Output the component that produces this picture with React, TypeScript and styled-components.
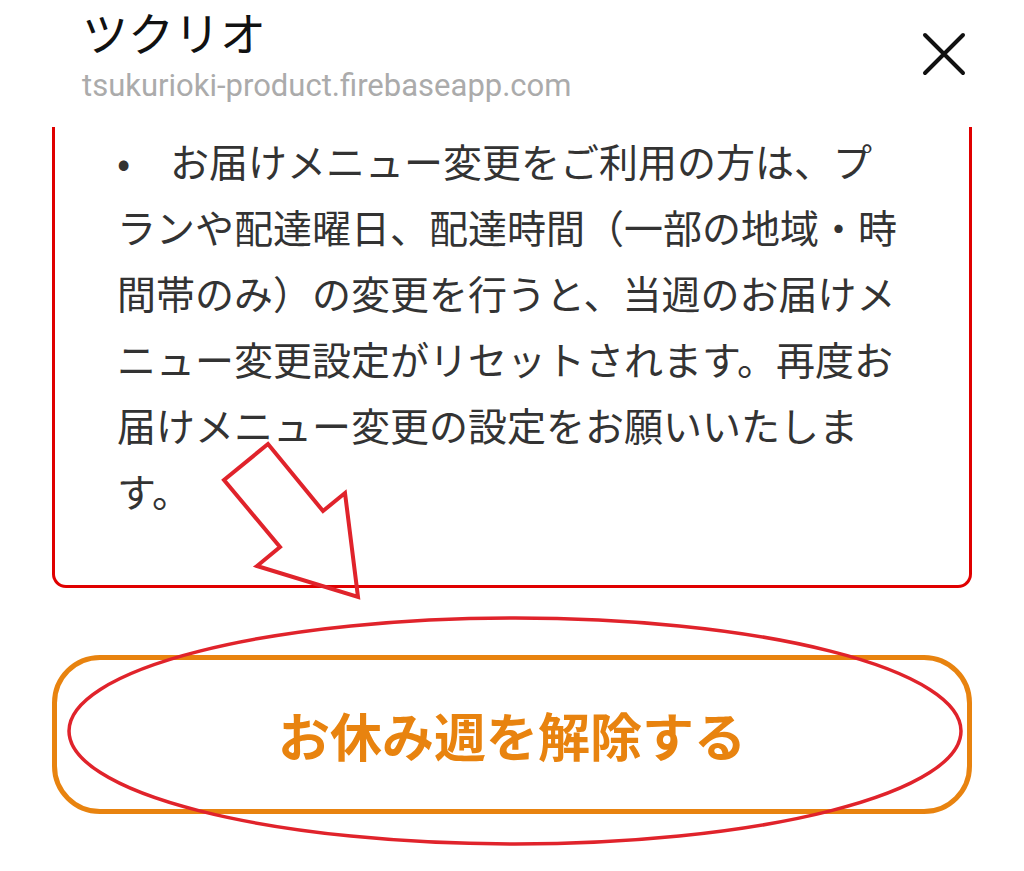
import React from 'react'
import styled, { createGlobalStyle } from 'styled-components'

const GlobalStyle = createGlobalStyle`
  html, body {
    margin: 0;
    padding: 0;
    background: #fff;
  }
  body {
    font-family: 'Noto Sans CJK JP', 'Noto Sans', sans-serif;
  }
`

const Page = styled.div`
  position: relative;
  width: 1024px;
  height: 871px;
  overflow: hidden;
  background: #fff;
`

const Header = styled.header`
  height: 127px;
  display: flex;
  justify-content: space-between;
  align-items: flex-start;
  padding: 0 56px 0 82px;
  box-sizing: border-box;
`

const TitleBlock = styled.div`
  display: flex;
  flex-direction: column;
`

const Title = styled.h1`
  margin: 0;
  font-family: 'Noto Sans CJK JP', sans-serif;
  font-size: 46px;
  font-weight: 400;
  line-height: 62px;
  color: #111;
`

const Url = styled.div`
  font-family: Roboto, 'Liberation Sans', sans-serif;
  font-size: 31px;
  line-height: 48px;
  color: #ababab;
`

const CloseButton = styled.button`
  margin-top: 30px;
  width: 48px;
  height: 48px;
  padding: 0;
  border: 0;
  background: none;
  display: flex;
  align-items: center;
  justify-content: center;
`

const Notice = styled.div`
  margin: 0 52px;
  border: 3px solid #e00000;
  border-top: 0;
  border-radius: 0 0 14px 14px;
  padding: 0 72px 62px 62px;
`

const NoticeText = styled.p`
  margin: 0;
  width: 20em;
  font-family: 'Noto Sans CJK JP', sans-serif;
  font-size: 39px;
  line-height: 66px;
  color: #333;
`

const Bullet = styled.span`
  display: inline-block;
  width: 1.36em;
`

const ReleaseButton = styled.button`
  display: flex;
  align-items: center;
  justify-content: center;
  box-sizing: border-box;
  width: calc(100% - 104px);
  height: 159px;
  margin: 67px 52px 0;
  border: 5px solid #e8830f;
  border-radius: 48px;
  background: #fff;
  font-family: 'Noto Sans CJK JP', sans-serif;
  font-size: 52px;
  font-weight: 700;
  color: #e8830f;
`

const Annotation = styled.svg`
  position: absolute;
  left: 0;
  top: 0;
  pointer-events: none;
`

const App = () => (
  <Page>
    <GlobalStyle />
    <Header>
      <TitleBlock>
        <Title>ツクリオ</Title>
        <Url>tsukurioki-product.firebaseapp.com</Url>
      </TitleBlock>
      <CloseButton aria-label="閉じる">
        <svg width="44" height="44" viewBox="0 0 44 44">
          <path d="M3 3 L41 41 M41 3 L3 41" stroke="#111" strokeWidth="4" strokeLinecap="round" />
        </svg>
      </CloseButton>
    </Header>
    <Notice>
      <NoticeText>
        <Bullet>•</Bullet>
        お届けメニュー変更をご利用の方は、プランや配達曜日、配達時間（一部の地域・時間帯のみ）の変更を行うと、当週のお届けメニュー変更設定がリセットされます。再度お届けメニュー変更の設定をお願いいたします。
      </NoticeText>
    </Notice>
    <ReleaseButton>お休み週を解除する</ReleaseButton>
    <Annotation width="1024" height="871" viewBox="0 0 1024 871">
      <polygon
        points="268,444 224,480 280,547 257,566 358,597 345,493 323,511"
        fill="none"
        stroke="#e0232b"
        strokeWidth="4"
        strokeLinejoin="miter"
      />
      <ellipse cx="515" cy="731" rx="446" ry="113" fill="none" stroke="#e0232b" strokeWidth="3.5" />
    </Annotation>
  </Page>
)

export default App
